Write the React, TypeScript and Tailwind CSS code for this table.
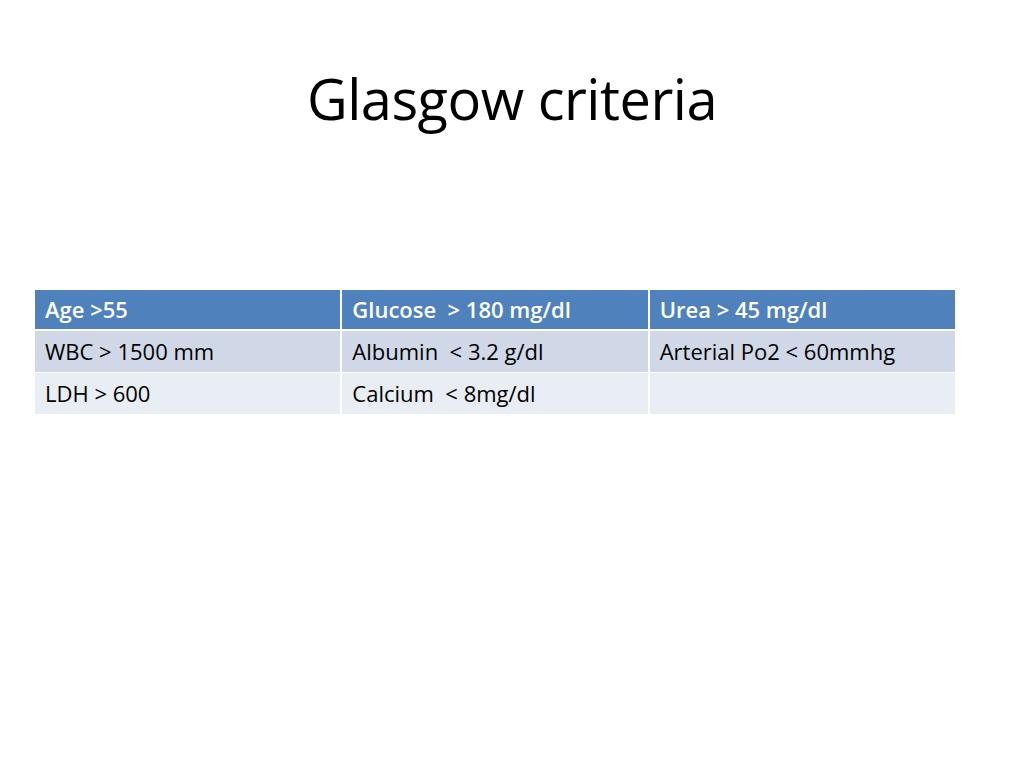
const rows = [
  ["Age >55", "Glucose  > 180 mg/dl", "Urea > 45 mg/dl"],
  ["WBC > 1500 mm", "Albumin  < 3.2 g/dl", "Arterial Po2 < 60mmhg"],
  ["LDH > 600", "Calcium  < 8mg/dl", ""],
]

export default function App() {
  return (
    <div className="w-[1024px] h-[768px] bg-white font-['Open_Sans',sans-serif] text-black">
      <div className="h-[290px] pt-[65px]">
        <h1 className="text-center text-[56px] leading-[66px] tracking-[-0.5px]">Glasgow criteria</h1>
      </div>
      <div className="ml-[35px] w-[920px] grid grid-cols-3 gap-x-[2px]">
        {rows.map((row, i) =>
          row.map((cell, j) => (
            <div
              key={`${i}-${j}`}
              className={
                i === 0
                  ? "h-[41px] bg-[#4f81bd] text-white font-semibold pl-[10px] pb-[1px] flex items-center text-[22px] whitespace-pre border-b-2 border-white"
                  : i === 1
                  ? "h-[42px] bg-[#d0d8e8] pl-[10px] flex items-center text-[22px] whitespace-pre border-b border-white"
                  : "h-[41px] bg-[#e9edf4] pl-[10px] flex items-center text-[22px] whitespace-pre"
              }
            >
              {cell}
            </div>
          ))
        )}
      </div>
    </div>
  )
}
